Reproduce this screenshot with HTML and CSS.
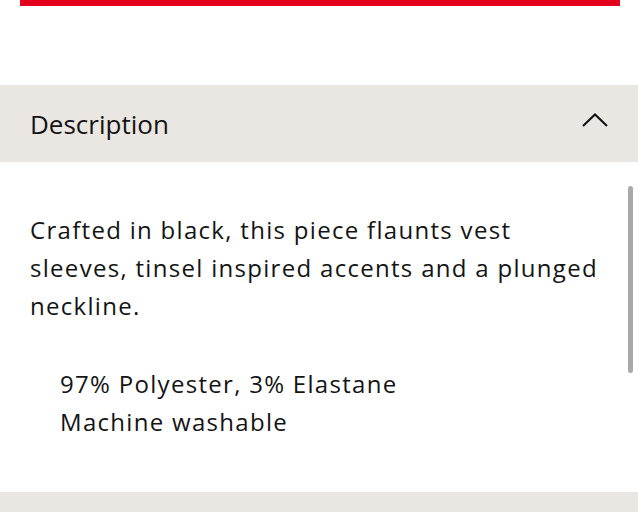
FILE: index.html
```html
<!DOCTYPE html>
<html lang="en">
<head>
  <meta charset="UTF-8">
  <meta name="viewport" content="width=device-width, initial-scale=1.0">
  <title>Product details</title>
  <link rel="stylesheet" href="styles.css">
</head>
<body>
  <div class="top-bar"></div>

  <section class="accordion">
    <div class="accordion-header">
      <span>Description</span>
      <svg class="chevron" width="26" height="14" viewBox="0 0 26 14" fill="none">
        <path d="M1 13 L13 1.5 L25 13" stroke="#111" stroke-width="2"/>
      </svg>
    </div>
    <div class="accordion-body">
      <p>Crafted in black, this piece flaunts vest sleeves, tinsel inspired accents and a plunged neckline.</p>
      <ul class="details">
        <li>97% Polyester, 3% Elastane</li>
        <li>Machine washable</li>
      </ul>
      <div class="scrollbar"></div>
    </div>
  </section>

  <section class="accordion">
    <div class="accordion-header"></div>
  </section>
</body>
</html>
```

FILE: styles.css
```css
:root {
  --red: #e4001d;
  --panel: #eae7e2;
  --text: #141414;
  --font: 'Open Sans', 'Lato', sans-serif;
}

*, *::before, *::after {
  box-sizing: border-box;
}

body {
  margin: 0;
  background: #fff;
  color: var(--text);
  font-family: var(--font);
}

.top-bar {
  height: 6px;
  margin: 0 18px 79px 20px;
  background: var(--red);
}

.accordion-header {
  height: 77px;
  padding: 0 30px;
  display: flex;
  align-items: center;
  justify-content: space-between;
  background: var(--panel);
  font-size: 26px;
}

.chevron {
  margin-bottom: 8px;
}

.accordion-body {
  position: relative;
  padding: 49px 30px 51px;
  font-size: 24px;
  line-height: 38px;
  letter-spacing: 1.3px;
}

.accordion-body p {
  max-width: 578px;
  margin: 0 0 40px;
}

.details {
  list-style: none;
  margin: 0;
  padding: 0 0 0 30px;
}

/* scroll thumb over the panel */
.scrollbar {
  position: absolute;
  top: 24px;
  right: 5px;
  width: 5px;
  height: 187px;
  border-radius: 3px;
  background: #a9a9a9;
}
```
